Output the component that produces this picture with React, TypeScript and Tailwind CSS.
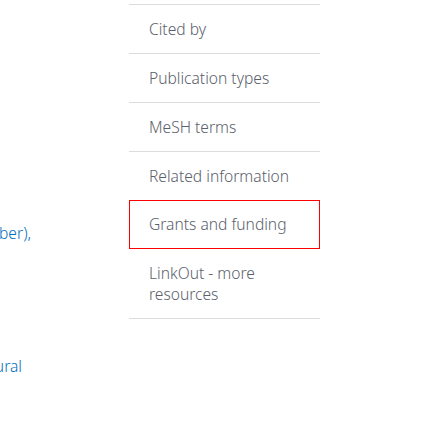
import React from 'react';

const navItems = [
  { id: 'cited-by', label: 'Cited by' },
  { id: 'publication-types', label: 'Publication types' },
  { id: 'mesh-terms', label: 'MeSH terms' },
  { id: 'related-information', label: 'Related information' },
  { id: 'grants-and-funding', label: 'Grants and funding' },
  { id: 'linkout', label: 'LinkOut - more resources' },
];

export default function App() {
  const activeId = 'grants-and-funding';

  return (
    <div className="flex h-[448px] w-[448px] overflow-hidden bg-white font-['Noto_Sans',sans-serif] text-[15.6px] font-light">
      {/* Article text, cut by the viewport */}
      <div className="w-[31px] shrink-0 text-[#0071bc]">
        <div className="mt-[222px] flex justify-end whitespace-nowrap leading-[22px]">(October),</div>
        <div className="mt-[111px] flex justify-end whitespace-nowrap pr-[9px] leading-[22px]">Natural</div>
      </div>

      {/* Page navigation */}
      <nav className="ml-[98px] mt-[4px] w-[191px] shrink-0 self-start border-t border-[#dcdcdc]">
        {navItems.map((item) => {
          const isActive = item.id === activeId;
          return (
            <a
              key={item.id}
              href={`#${item.id}`}
              className={`block leading-[21px] text-[#5b616b] ${
                isActive
                  ? 'relative z-10 -mt-px border border-[#ff0000] px-[19px] py-[13px]'
                  : 'border-b border-[#dcdcdc] px-[20px] py-[13.5px]'
              }`}
            >
              {item.label}
            </a>
          );
        })}
      </nav>
    </div>
  );
}
